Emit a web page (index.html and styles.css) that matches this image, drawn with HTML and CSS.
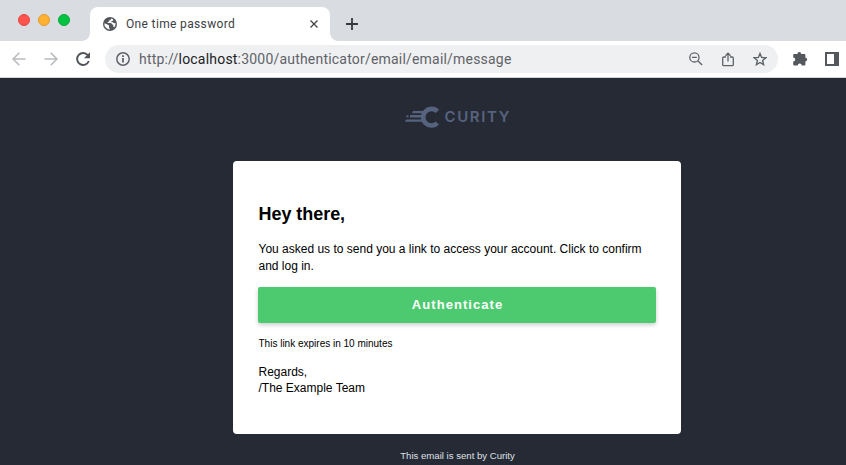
FILE: index.html
```html
<!DOCTYPE html>
<html lang="en">
<head>
<meta charset="utf-8">
<title>One time password</title>
<link rel="stylesheet" href="styles.css">
</head>
<body>
<header class="tabstrip">
  <div class="lights"><i class="light red"></i><i class="light amber"></i><i class="light green"></i></div>
  <div class="tab">
    <svg class="globe" width="14" height="14" viewBox="0 0 14 14"><circle cx="7" cy="7" r="7" fill="#53575c"/><path d="M1.4 6.2 4.9 7.7 6 8.6v1.8l1 2.1A5.6 5.6 0 0 1 1.4 6.2ZM8.2 1.5c-.2 1.2-.7 1.7-2 1.8l-.2 1.3-1.3.5v1h3.4l1.2 1.4 1.1.3-.2 1.9 1.2.6A5.6 5.6 0 0 0 12.5 6l-1.3.2-1.4-1H8.4V4.1l1.7-.4V2.3Z" fill="#fff"/></svg>
    <span class="tab-title">One time password</span>
    <svg class="close" width="8" height="8" viewBox="0 0 8 8"><path d="M.5.5l7 7M7.5.5l-7 7" stroke="#45494d" stroke-width="1.4"/></svg>
  </div>
  <svg class="plus" width="12" height="12" viewBox="0 0 12 12"><path d="M6 0v12M0 6h12" stroke="#36383b" stroke-width="1.8"/></svg>
</header>
<nav class="toolbar">
  <svg class="back" width="14" height="14" viewBox="0 0 14 14"><path d="M13.5 7H1M7.3.8 1.1 7l6.2 6.2" fill="none" stroke="#b9bbbe" stroke-width="1.6"/></svg>
  <svg class="forward" width="14" height="14" viewBox="0 0 14 14"><path d="M.5 7H13M6.7.8 12.9 7l-6.2 6.2" fill="none" stroke="#b9bbbe" stroke-width="1.6"/></svg>
  <svg class="reload" width="14" height="14" viewBox="0 0 14 14"><path d="M11.8 3.2A6 6 0 1 0 12.8 9" fill="none" stroke="#50545a" stroke-width="1.9"/><path d="M14 .2v6.1H7.9z" fill="#50545a"/></svg>
  <div class="address">
    <svg class="info" width="14" height="14" viewBox="0 0 14 14"><circle cx="7" cy="7" r="6.2" fill="none" stroke="#5f6368" stroke-width="1.5"/><path d="M7 6v4.6M7 3.3v1.6" stroke="#5f6368" stroke-width="1.8"/></svg>
    <span class="url">http://<b>localhost</b>:3000/authenticator/email/email/message</span>
    <svg class="search" width="14" height="14" viewBox="0 0 14 14"><circle cx="5.4" cy="5.4" r="4.6" fill="none" stroke="#5f6368" stroke-width="1.3"/><path d="M3 5.4h4.8M8.8 8.8l4.3 4.3" stroke="#5f6368" stroke-width="1.4"/></svg>
    <svg class="share" width="12" height="15" viewBox="0 0 12 15"><path d="M4 5H1.8Q.7 5 .7 6v6.7q0 1 1.1 1h8.4q1.1 0 1.1-1V6q0-1-1.1-1H8M6 9.4V1.3M3.4 3.8 6 1.2l2.6 2.6" fill="none" stroke="#5f6368" stroke-width="1.3"/></svg>
    <svg class="star" width="14" height="14" viewBox="0 0 14 14"><path d="m7 1.5 1.6 3.9 4.3.3-3.3 2.8 1 4.2L7 10.5l-3.6 2.2 1-4.2L1.1 5.7l4.3-.3z" fill="none" stroke="#5f6368" stroke-width="1.4"/></svg>
  </div>
  <svg class="puzzle" width="15" height="15" viewBox="0 0 15 15"><path d="M1.2 3h3.2a1.9 1.9 0 0 1 3.8 0h3.1q1.1 0 1.1 1.1v2.7a1.8 1.8 0 0 1 0 3.6v3q0 1.1-1.1 1.1H8.7a2 2 0 0 0-4 0H1.2Q.2 14.5.2 13.4V10.5a2 2 0 0 0 0-4V4q0-1 1-1Z" fill="#54585d"/></svg>
  <svg class="panel" width="14" height="14" viewBox="0 0 14 14"><path fill-rule="evenodd" d="M0 0h14v14H0zM2 2v10h7V2z" fill="#54585d"/></svg>
</nav>
<main class="mail">
  <svg class="logo" width="106" height="24" viewBox="0 0 106 24">
    <path d="M32.4 6.4A8.3 8.3 0 1 0 32.4 18" fill="none" stroke="#56637f" stroke-width="4.6"/>
    <path d="M8 6h11v2.2H7zM5 10h12v2.6H5zM1.5 10.3h2v2h-2zM1 14.6h16v2.2H0z" fill="#56637f"/>
    <text class="logo-text" x="39.5" y="17" textLength="65" lengthAdjust="spacing">CURITY</text>
  </svg>
  <section class="card">
    <h1>Hey there,</h1>
    <p class="intro">You asked us to send you a link to access your account. Click to confirm<br>and log in.</p>
    <a class="button">Authenticate</a>
    <p class="expires">This link expires in 10 minutes</p>
    <p class="regards">Regards,<br>/The Example Team</p>
  </section>
  <footer>This email is sent by Curity</footer>
</main>
</body>
</html>
```
FILE: styles.css
```css
* { box-sizing: border-box; }
body { margin: 0; width: 846px; height: 465px; overflow: hidden; background: #262a35; font-family: "Liberation Sans", Arial, sans-serif; color: #000; }
svg { display: block; flex: none; }
.tabstrip { display: flex; height: 41px; background: #d9dce1; }
.lights { display: flex; gap: 8px; padding: 14px 0 0 18px; width: 90px; }
.light { width: 12px; height: 12px; border-radius: 50%; border: 1px solid; }
.red { background: #ff544d; border-color: #e8463f; }
.amber { background: #ffb132; border-color: #e59c29; }
.green { background: #00c344; border-color: #00ab38; }
.tab { position: relative; display: flex; align-items: center; width: 240px; height: 34px; margin-top: 7px; padding: 0 12px 0 13px; background: #fff; border-radius: 8px 8px 0 0; }
.tab::before, .tab::after { content: ""; position: absolute; bottom: 0; width: 8px; height: 8px; }
.tab::before { left: -8px; background: radial-gradient(circle at 0 0, transparent 7.5px, #fff 8.2px); }
.tab::after { right: -8px; background: radial-gradient(circle at 100% 0, transparent 7.5px, #fff 8.2px); }
.tab-title { flex: 1; margin-left: 9px; font: 12px/16px Roboto, sans-serif; letter-spacing: .35px; color: #3c4043; white-space: nowrap; }
.plus { margin: 18px 0 0 16px; }
.toolbar { display: flex; align-items: center; height: 37px; padding-left: 12px; background: #fff; border-bottom: 1px solid #d2d4d8; }
.forward { margin-left: 18px; }
.reload { margin-left: 18px; }
.address { display: flex; align-items: center; width: 673px; height: 28px; margin-left: 15px; padding: 0 11px; border-radius: 14px; background: #eff0f2; }
.url { flex: 1; margin-left: 9px; font: 14px/20px Roboto, sans-serif; letter-spacing: .2px; color: #5f6368; white-space: nowrap; }
.url b { font-weight: 400; color: #202124; }
.share { margin-left: 19px; }
.star { margin-left: 19px; }
.puzzle { margin: -2px 0 0 15px; }
.panel { margin-left: 17px; }
.mail { display: flex; flex-direction: column; align-items: center; padding-top: 27px; }
.logo { margin-left: 70px; }
.logo-text { font: 600 15px Inter, sans-serif; fill: #56637f; }
.card { width: 448px; height: 273px; margin: 32px 0 0 68px; padding: 42px 25px 0; background: #fff; border-radius: 4px; }
h1 { margin: 0 0 0 .5px; font-size: 18px; line-height: 22px; letter-spacing: -.05px; }
p { margin: 0 0 0 .5px; white-space: nowrap; }
.intro { margin-top: 16px; font-size: 12px; line-height: 17px; }
.button { display: block; height: 36px; margin-top: 12px; padding-left: 1px; border-radius: 2px; background: #4dca6f; box-shadow: 0 2px 4px rgba(0,0,0,.2); color: #fff; text-align: center; font-size: 13px; font-weight: 700; line-height: 35px; letter-spacing: 1.05px; }
.expires { margin-top: 14px; font-size: 10px; line-height: 14px; }
.regards { margin-top: 13px; font-size: 12px; line-height: 16px; }
footer { margin: 15px 0 0 69px; font-size: 9.6px; line-height: 14px; color: #dfe1e5; }
```
